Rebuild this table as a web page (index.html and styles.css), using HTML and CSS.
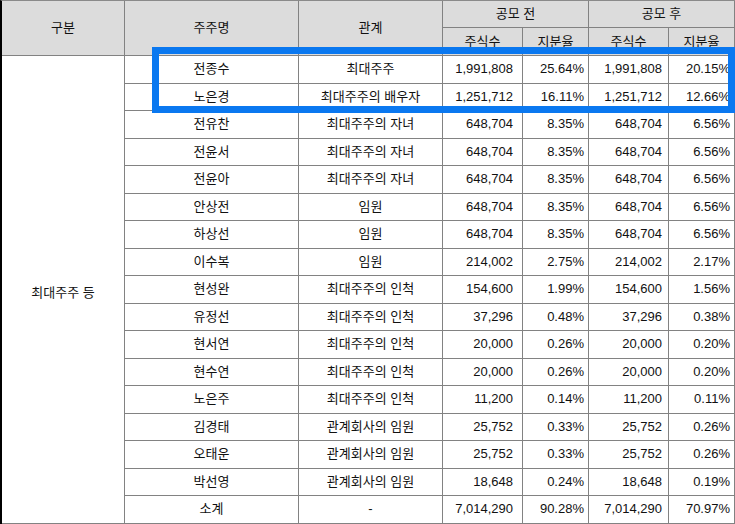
FILE: index.html
```html
<!DOCTYPE html>
<html lang="ko">
<head>
<meta charset="utf-8">
<link rel="stylesheet" href="styles.css">
</head>
<body>
<div class="wrap">
<table class="grid">
<colgroup>
<col class="c1"><col class="c2"><col class="c3"><col class="c4"><col class="c5"><col class="c6"><col class="c7">
</colgroup>
<thead>
<tr class="h1"><th rowspan="2">구분</th><th rowspan="2">주주명</th><th rowspan="2">관계</th><th colspan="2">공모 전</th><th colspan="2">공모 후</th></tr>
<tr class="h2"><th>주식수</th><th>지분율</th><th>주식수</th><th>지분율</th></tr>
</thead>
<tbody>
<tr><td rowspan="17" class="group">최대주주 등</td><td>전종수</td><td>최대주주</td><td class="n4">1,991,808</td><td class="n5">25.64%</td><td class="n6">1,991,808</td><td class="n7">20.15%</td></tr>
<tr><td>노은경</td><td>최대주주의 배우자</td><td class="n4">1,251,712</td><td class="n5">16.11%</td><td class="n6">1,251,712</td><td class="n7">12.66%</td></tr>
<tr><td>전유찬</td><td>최대주주의 자녀</td><td class="n4">648,704</td><td class="n5">8.35%</td><td class="n6">648,704</td><td class="n7">6.56%</td></tr>
<tr><td>전윤서</td><td>최대주주의 자녀</td><td class="n4">648,704</td><td class="n5">8.35%</td><td class="n6">648,704</td><td class="n7">6.56%</td></tr>
<tr><td>전윤아</td><td>최대주주의 자녀</td><td class="n4">648,704</td><td class="n5">8.35%</td><td class="n6">648,704</td><td class="n7">6.56%</td></tr>
<tr><td>안상전</td><td>임원</td><td class="n4">648,704</td><td class="n5">8.35%</td><td class="n6">648,704</td><td class="n7">6.56%</td></tr>
<tr><td>하상선</td><td>임원</td><td class="n4">648,704</td><td class="n5">8.35%</td><td class="n6">648,704</td><td class="n7">6.56%</td></tr>
<tr><td>이수복</td><td>임원</td><td class="n4">214,002</td><td class="n5">2.75%</td><td class="n6">214,002</td><td class="n7">2.17%</td></tr>
<tr><td>현성완</td><td>최대주주의 인척</td><td class="n4">154,600</td><td class="n5">1.99%</td><td class="n6">154,600</td><td class="n7">1.56%</td></tr>
<tr><td>유정선</td><td>최대주주의 인척</td><td class="n4">37,296</td><td class="n5">0.48%</td><td class="n6">37,296</td><td class="n7">0.38%</td></tr>
<tr><td>현서연</td><td>최대주주의 인척</td><td class="n4">20,000</td><td class="n5">0.26%</td><td class="n6">20,000</td><td class="n7">0.20%</td></tr>
<tr><td>현수연</td><td>최대주주의 인척</td><td class="n4">20,000</td><td class="n5">0.26%</td><td class="n6">20,000</td><td class="n7">0.20%</td></tr>
<tr><td>노은주</td><td>최대주주의 인척</td><td class="n4">11,200</td><td class="n5">0.14%</td><td class="n6">11,200</td><td class="n7">0.11%</td></tr>
<tr><td>김경태</td><td>관계회사의 임원</td><td class="n4">25,752</td><td class="n5">0.33%</td><td class="n6">25,752</td><td class="n7">0.26%</td></tr>
<tr><td>오태운</td><td>관계회사의 임원</td><td class="n4">25,752</td><td class="n5">0.33%</td><td class="n6">25,752</td><td class="n7">0.26%</td></tr>
<tr><td>박선영</td><td>관계회사의 임원</td><td class="n4">18,648</td><td class="n5">0.24%</td><td class="n6">18,648</td><td class="n7">0.19%</td></tr>
<tr><td>소계</td><td>-</td><td class="n4">7,014,290</td><td class="n5">90.28%</td><td class="n6">7,014,290</td><td class="n7">70.97%</td></tr>
</tbody>
</table>
<div class="highlight"></div>
</div>
</body>
</html>
```
FILE: styles.css
```css
html, body {
  margin: 0;
  padding: 0;
  background: #ffffff;
}
.wrap {
  position: relative;
  width: 735px;
  height: 524px;
  overflow: hidden;
}
.grid {
  border-collapse: separate;
  border-spacing: 0;
  table-layout: fixed;
  width: 735px;
  border-left: 2px solid #000;
  border-top: 1px solid #8a8a8a;
  font-family: "Liberation Sans", "Noto Sans CJK KR", sans-serif;
  font-size: 13px;
  color: #111;
}
.c1 { width: 123px; }
.c2 { width: 174px; }
.c3 { width: 144px; }
.c4 { width: 80px; }
.c5 { width: 66px; }
.c6 { width: 80px; }
.c7 { width: 66px; }
.grid tr { height: 27.5px; }
.grid tr.h1 { height: 27px; }
.grid tr.h2 { height: 28px; }
.grid th, .grid td {
  border-right: 1px solid #828282;
  border-bottom: 1px solid #828282;
  padding: 0;
  text-align: center;
  vertical-align: middle;
  white-space: nowrap;
  font-weight: normal;
  line-height: 16px;
}
.grid th {
  background: #dcdcdc;
}
.grid .group { padding-top: 8px; }
.grid .n4 { text-align: right; padding-right: 9px; }
.grid .n5 { text-align: right; padding-right: 4px; }
.grid .n6 { text-align: right; padding-right: 6px; }
.grid .n7 { text-align: right; padding-right: 4px; }
.highlight {
  position: absolute;
  left: 152px;
  top: 47px;
  width: 583px;
  height: 66px;
  box-sizing: border-box;
  border: 7px solid #0a78f0;
}
```
